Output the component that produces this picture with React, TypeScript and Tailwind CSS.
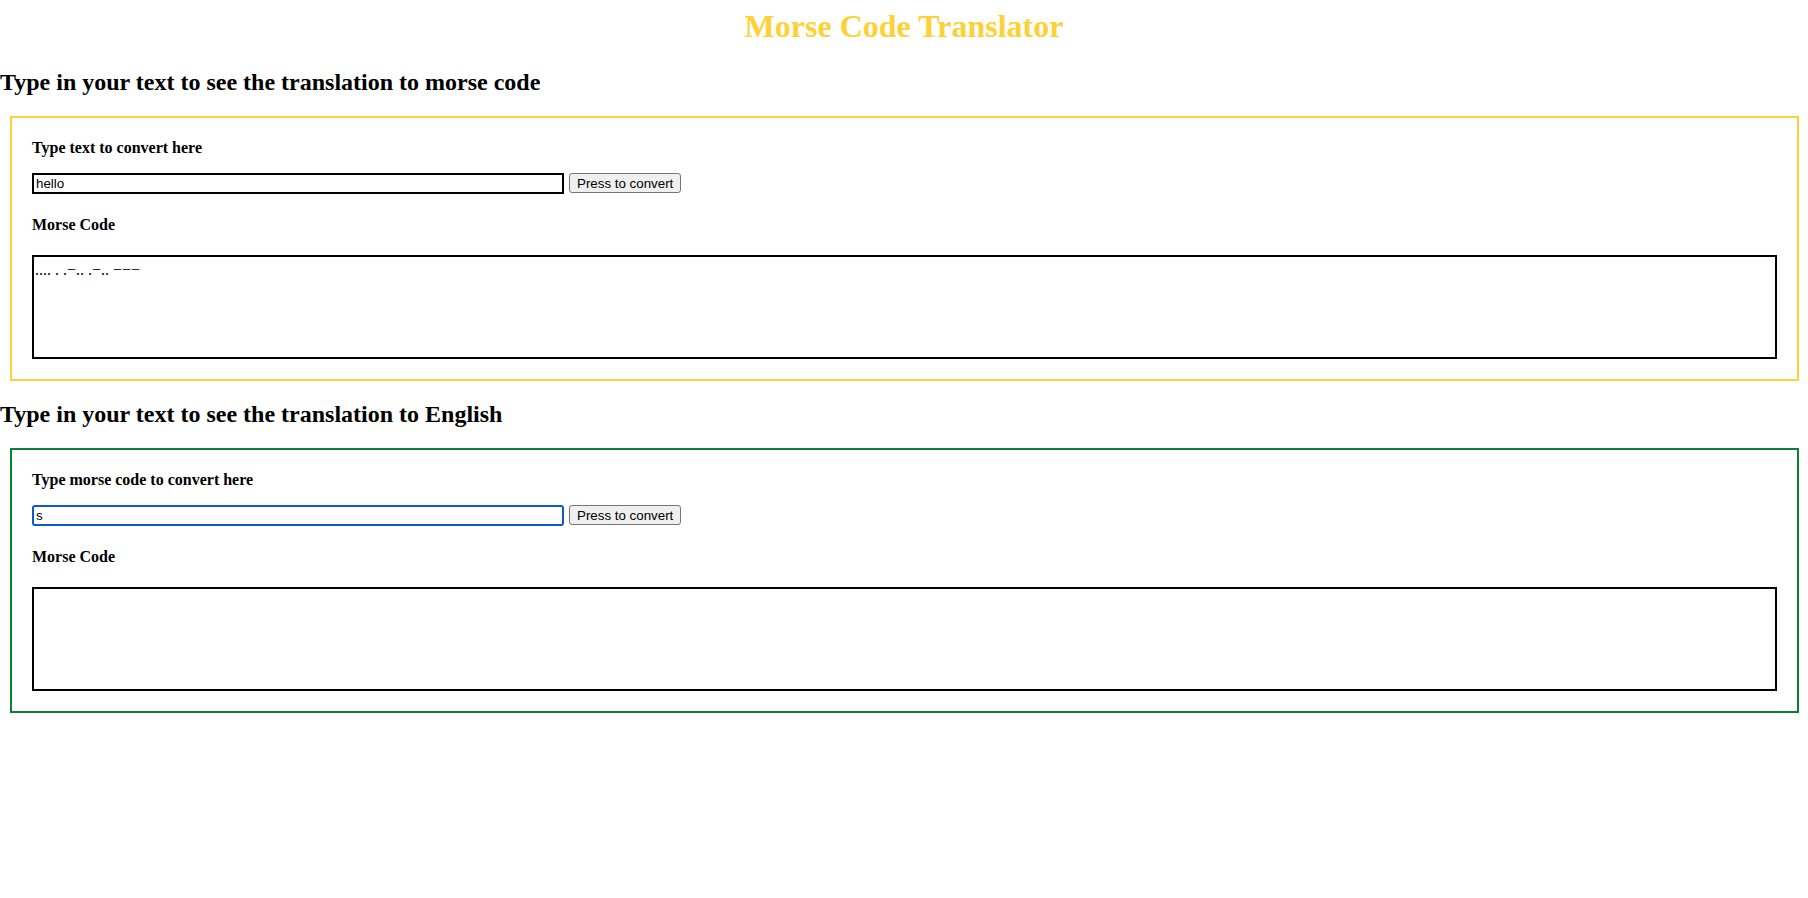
import { useState } from 'react'

interface SectionProps {
  heading: string
  label: string
  initial: string
  boxClass: string
  inputClass: string
  output: string
}

function Section({ heading, label, initial, boxClass, inputClass, output }: SectionProps) {
  const [text, setText] = useState(initial)

  return (
    <>
      <h2 className="mt-[24px] mb-[20px] text-[24px] font-bold">{heading}</h2>
      <div className={`ml-[10px] mr-[9px] border-2 px-[20px] pt-[21px] pb-[20px] ${boxClass}`}>
        <p className="text-[16px] font-bold">{label}</p>
        <div className="mt-[16px] flex items-start">
          <input
            type="text"
            value={text}
            onChange={(e) => setText(e.target.value)}
            className={`h-[21px] w-[532px] border-2 px-[2px] py-[1px] font-['Liberation_Sans',Arial,sans-serif] text-[13.33px] leading-[normal] text-black outline-none ${inputClass}`}
          />
          <button
            type="button"
            className="ml-[5px] h-[20px] rounded-[3px] border border-[#767676] bg-[#efefef] px-[7px] font-['Liberation_Sans',Arial,sans-serif] text-[13.33px] leading-[normal] text-black"
          >
            Press to convert
          </button>
        </div>
        <p className="mt-[22px] text-[16px] font-bold">Morse Code</p>
        <div className="mt-[21px] h-[104px] border-2 border-black pt-[4px] pl-[1px] text-[16px]">{output}</div>
      </div>
    </>
  )
}

export default function App() {
  return (
    <div className="min-h-[898px] bg-white pt-[8px] font-['Liberation_Serif','Times_New_Roman',serif] leading-[normal] text-black">
      <h1 className="text-center text-[32px] font-bold text-[#fed136]">Morse Code Translator</h1>
      <Section
        heading="Type in your text to see the translation to morse code"
        label="Type text to convert here"
        initial="hello"
        boxClass="border-[#fed136]"
        inputClass="border-black"
        output=".... . .−.. .−.. −−−"
      />
      <div className="-mt-[4px]">
        <Section
          heading="Type in your text to see the translation to English"
          label="Type morse code to convert here"
          initial="s"
          boxClass="border-[#0b7f33]"
          inputClass="rounded-[3px] border-[#0a5bc7]"
          output=""
        />
      </div>
    </div>
  )
}
